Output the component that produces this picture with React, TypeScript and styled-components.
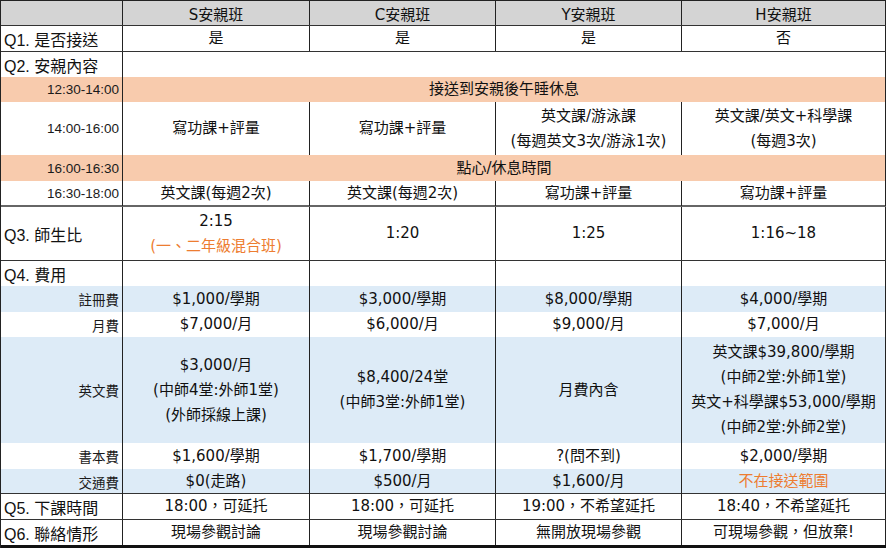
import React from 'react';
import styled, { createGlobalStyle } from 'styled-components';

const GlobalStyle = createGlobalStyle`
  html, body {
    margin: 0;
    padding: 0;
    background: #ffffff;
  }
  body {
    font-family: "DejaVu Sans", "Noto Sans CJK TC", sans-serif;
    color: #111;
  }
`;

type Tone = 'plain' | 'orange' | 'blue' | 'head';
type Rule = 'none' | 'thin' | 'strong' | 'end';
type Text = string | { text: string; accent: true };

const toneColors: Record<Tone, string> = {
  plain: '#ffffff',
  orange: '#f8cbad',
  blue: '#ddebf7',
  head: '#d4d4d4',
};

const ruleStyles: Record<Rule, string> = {
  none: 'none',
  thin: '1px solid #333',
  strong: '2px solid #666',
  end: '3px solid #111',
};

const COLUMNS = '122px 187px 186px 186px 204px';

const Sheet = styled.div`
  width: 886px;
  border-left: 1px solid #222;
  border-top: 1px solid #222;
  box-sizing: border-box;
`;

const Row = styled.div<{ $h: number; $tone: Tone; $rule: Rule }>`
  display: grid;
  grid-template-columns: ${COLUMNS};
  height: ${(p) => p.$h}px;
  box-sizing: border-box;
  background: ${(p) => toneColors[p.$tone]};
  border-bottom: ${(p) => ruleStyles[p.$rule]};
`;

const Cell = styled.div`
  display: flex;
  flex-direction: column;
  align-items: center;
  justify-content: center;
  border-right: 1px solid #222;
  font-size: 15px;
  min-width: 0;
`;

const HeadCell = styled(Cell)`
  font-size: 15px;
  color: #111;
`;

const QuestionCell = styled(Cell)`
  align-items: flex-start;
  padding-left: 3px;
  font-family: "Liberation Sans", "Noto Sans CJK TC", sans-serif;
  font-size: 16px;
  white-space: nowrap;
`;

const SubCell = styled(Cell)`
  align-items: flex-end;
  padding-right: 3px;
  font-family: "Liberation Sans", "Noto Sans CJK TC", sans-serif;
  font-size: 13.5px;
  color: #1a1a1a;
  white-space: nowrap;
`;

const BandCell = styled(Cell)`
  grid-column: span 4;
`;

const Line = styled.span<{ $accent?: boolean }>`
  display: block;
  line-height: 25px;
  white-space: nowrap;
  color: ${(p) => (p.$accent ? '#ed7d31' : 'inherit')};
`;

type RowSpec = {
  label: string;
  kind: 'q' | 'sub';
  h: number;
  tone?: Tone;
  rule?: Rule;
  band?: string;
  cells?: Text[][];
};

const hot = (text: string): Text => ({ text, accent: true });

const heads = ['S安親班', 'C安親班', 'Y安親班', 'H安親班'];

const rows: RowSpec[] = [
  { label: 'Q1. 是否接送', kind: 'q', h: 26, rule: 'thin', cells: [['是'], ['是'], ['是'], ['否']] },
  { label: 'Q2. 安親內容', kind: 'q', h: 25, band: '' },
  { label: '12:30-14:00', kind: 'sub', h: 25, tone: 'orange', band: '接送到安親後午睡休息' },
  {
    label: '14:00-16:00',
    kind: 'sub',
    h: 53,
    cells: [
      ['寫功課+評量'],
      ['寫功課+評量'],
      ['英文課/游泳課', '(每週英文3次/游泳1次)'],
      ['英文課/英文+科學課', '(每週3次)'],
    ],
  },
  { label: '16:00-16:30', kind: 'sub', h: 26, tone: 'orange', band: '點心/休息時間' },
  {
    label: '16:30-18:00',
    kind: 'sub',
    h: 26,
    rule: 'strong',
    cells: [['英文課(每週2次)'], ['英文課(每週2次)'], ['寫功課+評量'], ['寫功課+評量']],
  },
  {
    label: 'Q3. 師生比',
    kind: 'q',
    h: 54,
    rule: 'thin',
    cells: [['2:15', hot('(一、二年級混合班)')], ['1:20'], ['1:25'], ['1:16~18']],
  },
  { label: 'Q4. 費用', kind: 'q', h: 25, cells: [[], [], [], []] },
  {
    label: '註冊費',
    kind: 'sub',
    h: 26,
    tone: 'blue',
    cells: [['$1,000/學期'], ['$3,000/學期'], ['$8,000/學期'], ['$4,000/學期']],
  },
  {
    label: '月費',
    kind: 'sub',
    h: 25,
    cells: [['$7,000/月'], ['$6,000/月'], ['$9,000/月'], ['$7,000/月']],
  },
  {
    label: '英文費',
    kind: 'sub',
    h: 106,
    tone: 'blue',
    cells: [
      ['$3,000/月', '(中師4堂:外師1堂)', '(外師採線上課)'],
      ['$8,400/24堂', '(中師3堂:外師1堂)'],
      ['月費內含'],
      ['英文課$39,800/學期', '(中師2堂:外師1堂)', '英文+科學課$53,000/學期', '(中師2堂:外師2堂)'],
    ],
  },
  {
    label: '書本費',
    kind: 'sub',
    h: 26,
    cells: [['$1,600/學期'], ['$1,700/學期'], ['?(問不到)'], ['$2,000/學期']],
  },
  {
    label: '交通費',
    kind: 'sub',
    h: 25,
    tone: 'blue',
    rule: 'thin',
    cells: [['$0(走路)'], ['$500/月'], ['$1,600/月'], [hot('不在接送範圍')]],
  },
  {
    label: 'Q5. 下課時間',
    kind: 'q',
    h: 26,
    rule: 'thin',
    cells: [['18:00，可延托'], ['18:00，可延托'], ['19:00，不希望延托'], ['18:40，不希望延托']],
  },
  {
    label: 'Q6. 聯絡情形',
    kind: 'q',
    h: 28,
    rule: 'end',
    cells: [['現場參觀討論'], ['現場參觀討論'], ['無開放現場參觀'], ['可現場參觀，但放棄!']],
  },
];

const renderLines = (lines: Text[]) =>
  lines.map((l, i) =>
    typeof l === 'string' ? (
      <Line key={i}>{l}</Line>
    ) : (
      <Line key={i} $accent>
        {l.text}
      </Line>
    )
  );

const App: React.FC = () => {
  return (
    <>
      <GlobalStyle />
      <Sheet>
        <Row $h={25} $tone="head" $rule="thin">
          <HeadCell />
          {heads.map((h) => (
            <HeadCell key={h}>{h}</HeadCell>
          ))}
        </Row>

        {rows.map((row) => (
          <Row key={row.label} $h={row.h} $tone={row.tone ?? 'plain'} $rule={row.rule ?? 'none'}>
            {row.kind === 'q' ? <QuestionCell>{row.label}</QuestionCell> : <SubCell>{row.label}</SubCell>}
            {row.band !== undefined ? (
              <BandCell>{row.band && <Line>{row.band}</Line>}</BandCell>
            ) : (
              row.cells?.map((c, i) => <Cell key={i}>{renderLines(c)}</Cell>)
            )}
          </Row>
        ))}
      </Sheet>
    </>
  );
};

export default App;
